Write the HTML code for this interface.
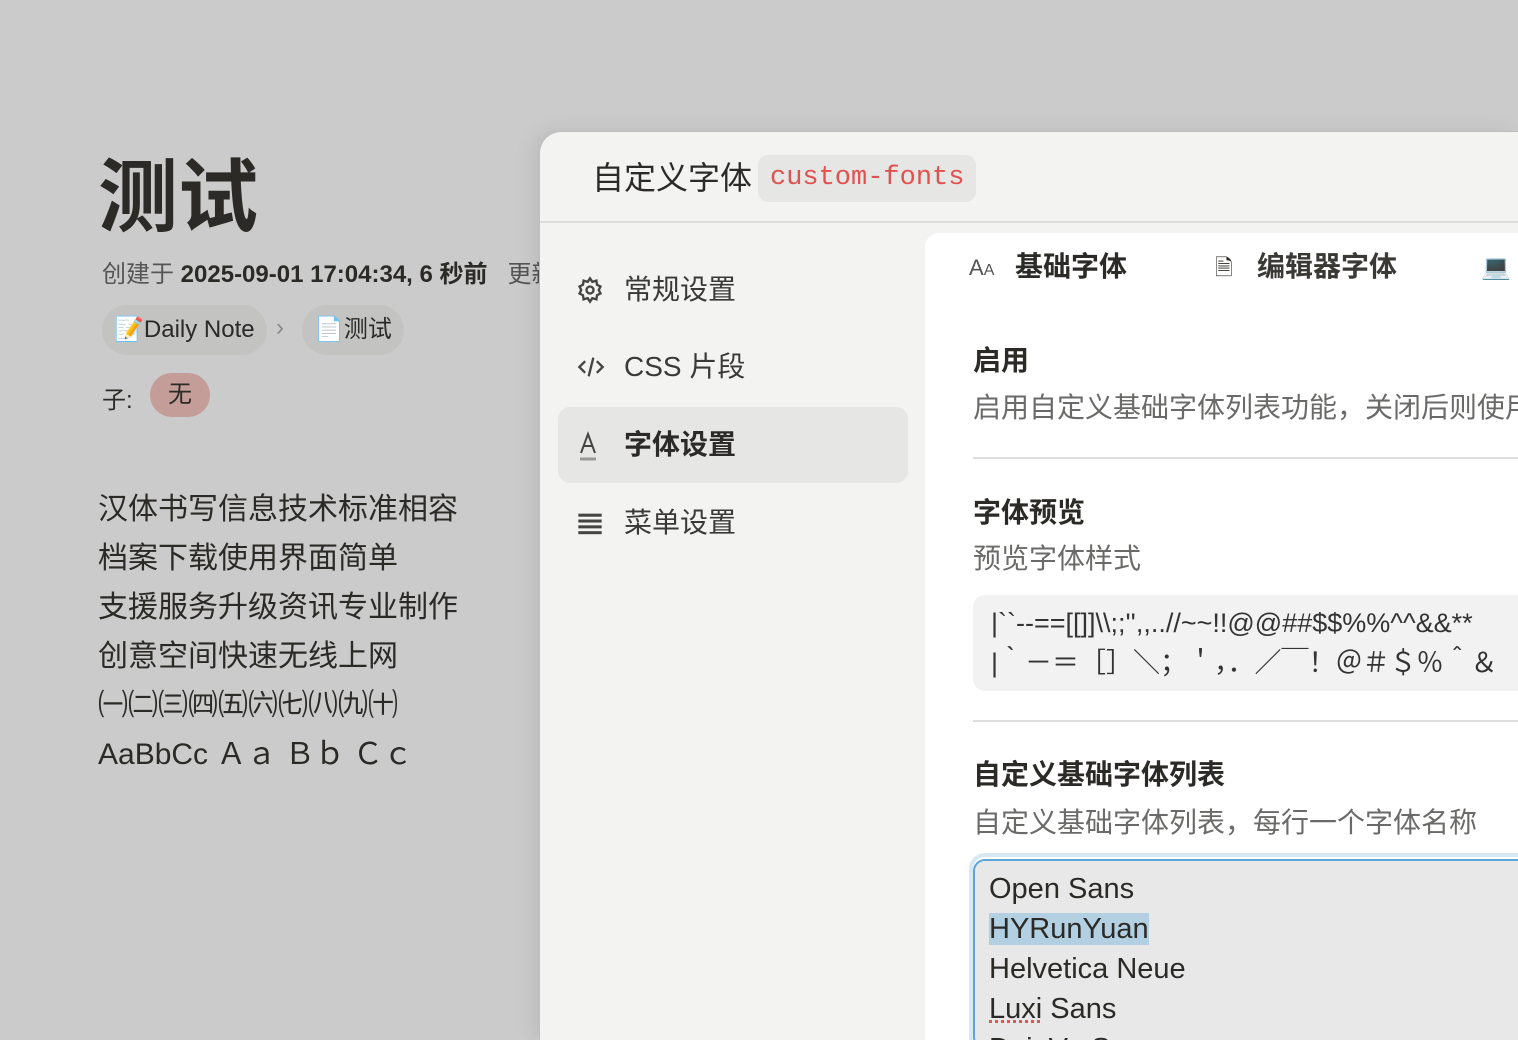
<!DOCTYPE html>
<html><head><meta charset="utf-8"><style>
*{margin:0;padding:0;box-sizing:border-box}
html,body{width:1518px;height:1040px;overflow:hidden}
body{background:#cbcbcb;font-family:"Liberation Sans","Noto Sans CJK SC",sans-serif;color:#2b2a27;position:relative}
.a{position:absolute;white-space:nowrap}
.pill{position:absolute;background:#c3c3c2;border-radius:25px;height:50px;font-size:24px;line-height:50px;padding:0 12px;white-space:nowrap}
.modal{position:absolute;left:539px;top:131px;width:979px;height:909px;background:#f3f3f2;border-radius:22px 0 0 0;border:1px solid #bdbdbd;border-right:none;border-bottom:none;box-shadow:-6px 0 20px rgba(0,0,0,.08);overflow:hidden}
.nav{position:absolute;left:18px;width:350px;height:76px;border-radius:12px;font-size:28px;line-height:76px;padding-left:66px;color:#3a3936}
.nav svg{position:absolute;left:18px;top:24px}
.panel{position:absolute;left:385px;top:101px;width:594px;height:808px;background:#fff;border-radius:14px 0 0 0;overflow:hidden}
.h{font-size:28px;font-weight:bold;color:#2b2a27}
.d{font-size:28px;color:#6a6a68}
.hr{position:absolute;left:48px;width:600px;height:2px;background:#dededd}
</style></head><body>
<div class="a" style="left:98px;top:150px;font-size:80px;font-weight:bold;line-height:95px">测试</div>
<div class="a" style="left:102px;top:260px;font-size:24px;line-height:30px;color:#555">创建于 <b style="color:#2b2a27">2025-09-01 17:04:34, 6 秒前</b>&nbsp;&nbsp;&nbsp;更新</div>
<div class="pill" style="left:102px;top:305px">📝Daily Note</div>
<div class="a" style="left:276px;top:314px;font-size:24px;color:#888">›</div>
<div class="pill" style="left:302px;top:305px">📄测试</div>
<div class="a" style="left:102px;top:380px;font-size:24px">子:</div>
<div class="a" style="left:150px;top:373px;width:60px;height:44px;border-radius:22px;background:#c49c98;font-size:24px;line-height:44px;text-align:center">无</div>
<div class="a" style="left:98px;top:485px;font-size:30px;line-height:49px">汉体书写信息技术标准相容<br>档案下载使用界面简单<br>支援服务升级资讯专业制作<br>创意空间快速无线上网<br>㈠㈡㈢㈣㈤㈥㈦㈧㈨㈩<br>AaBbCc Ａａ Ｂｂ Ｃｃ</div>

<div class="modal">
 <div class="a" style="left:52px;top:24px;font-size:32px;line-height:44px">自定义字体</div>
 <div class="a" style="left:218px;top:23px;height:47px;padding:0 12px;border-radius:10px;background:#e6e6e5;color:#e0524f;font-family:'Liberation Mono',monospace;font-size:27px;line-height:47px">custom-fonts</div>
 <div class="a" style="left:0;top:89px;width:979px;height:2px;background:#dcdcdb"></div>
 <div class="nav" style="top:120px"><svg width="28" height="28" viewBox="0 0 24 24" fill="none" stroke="#444" stroke-width="2"><circle cx="12" cy="12" r="3"/><path d="M12 2l2 3 3.5-1 .5 3.5 3 1.5-1.5 3 1.5 3-3 1.5-.5 3.5-3.5-1-2 3-2-3-3.5 1-.5-3.5-3-1.5 1.5-3-1.5-3 3-1.5.5-3.5 3.5 1z"/></svg>常规设置</div>
 <div class="nav" style="top:197px"><svg width="30" height="28" viewBox="0 0 24 24" fill="none" stroke="#444" stroke-width="2"><path d="M7 7l-5 5 5 5M17 7l5 5-5 5M14 4l-4 16"/></svg>CSS 片段</div>
 <div class="nav" style="top:275px;background:#e6e6e5;font-weight:bold;color:#2b2a27"><svg width="24" height="30" viewBox="0 0 24 30" fill="none" stroke="#444" stroke-width="2"><path d="M5 22L12 3l7 19M8 15h8"/><path d="M4 28h16" stroke="#999" stroke-width="3"/></svg>字体设置</div>
 <div class="nav" style="top:353px"><svg width="28" height="28" viewBox="0 0 24 24" fill="#444"><rect x="2" y="4" width="20" height="2.6"/><rect x="2" y="9" width="20" height="2.6"/><rect x="2" y="14" width="20" height="2.6"/><rect x="2" y="19" width="20" height="2.6"/></svg>菜单设置</div>
 <div class="panel">
  <div class="a" style="left:44px;top:18px;font-size:22px;color:#555;line-height:34px">A<span style="font-size:16px">A</span></div>
  <div class="a h" style="left:90px;top:14px;line-height:40px">基础字体</div>
  <div class="a" style="left:290px;top:18px;font-size:22px;line-height:34px">🗎</div>
  <div class="a" style="left:332px;top:14px;font-size:28px;line-height:40px;color:#3a3936;font-weight:bold">编辑器字体</div>
  <div class="a" style="left:556px;top:18px;font-size:24px;line-height:34px">💻</div>
  <div class="a h" style="left:48px;top:108px;line-height:40px">启用</div>
  <div class="a d" style="left:48px;top:155px;line-height:40px">启用自定义基础字体列表功能，关闭后则使用默认字体</div>
  <div class="hr" style="top:224px"></div>
  <div class="a h" style="left:48px;top:260px;line-height:40px">字体预览</div>
  <div class="a d" style="left:48px;top:306px;line-height:40px">预览字体样式</div>
  <div class="a" style="left:48px;top:362px;width:600px;height:96px;background:#f2f2f2;border-radius:12px;padding:8px 18px;font-size:27px;line-height:40px;color:#333;overflow:hidden">|``--==[[]]\\;;'',,..//~~!!@@##$$%%^^&amp;&amp;**<br>|｀－＝［］＼；＇，．／￣！＠＃＄％＾＆</div>
  <div class="hr" style="top:487px"></div>
  <div class="a h" style="left:48px;top:522px;line-height:40px">自定义基础字体列表</div>
  <div class="a d" style="left:48px;top:570px;line-height:40px">自定义基础字体列表，每行一个字体名称</div>
  <div class="a" style="left:44px;top:620px;width:620px;height:200px;border:4px solid #d6e9f3;border-radius:16px"></div>
  <div class="a" style="left:48px;top:626px;width:610px;height:190px;background:#e8e8e8;border:2px solid #5aa6d6;border-radius:12px;padding:8px 14px;font-size:29px;line-height:40px;color:#2b2a27;overflow:hidden">Open Sans<br><span style="background:#b2d0e2">HYRunYuan</span><br>Helvetica Neue<br><span style="text-decoration:underline dotted #e0524f">Luxi</span> Sans<br>DejaVu Sans</div>
 </div>
</div>
</body></html>
